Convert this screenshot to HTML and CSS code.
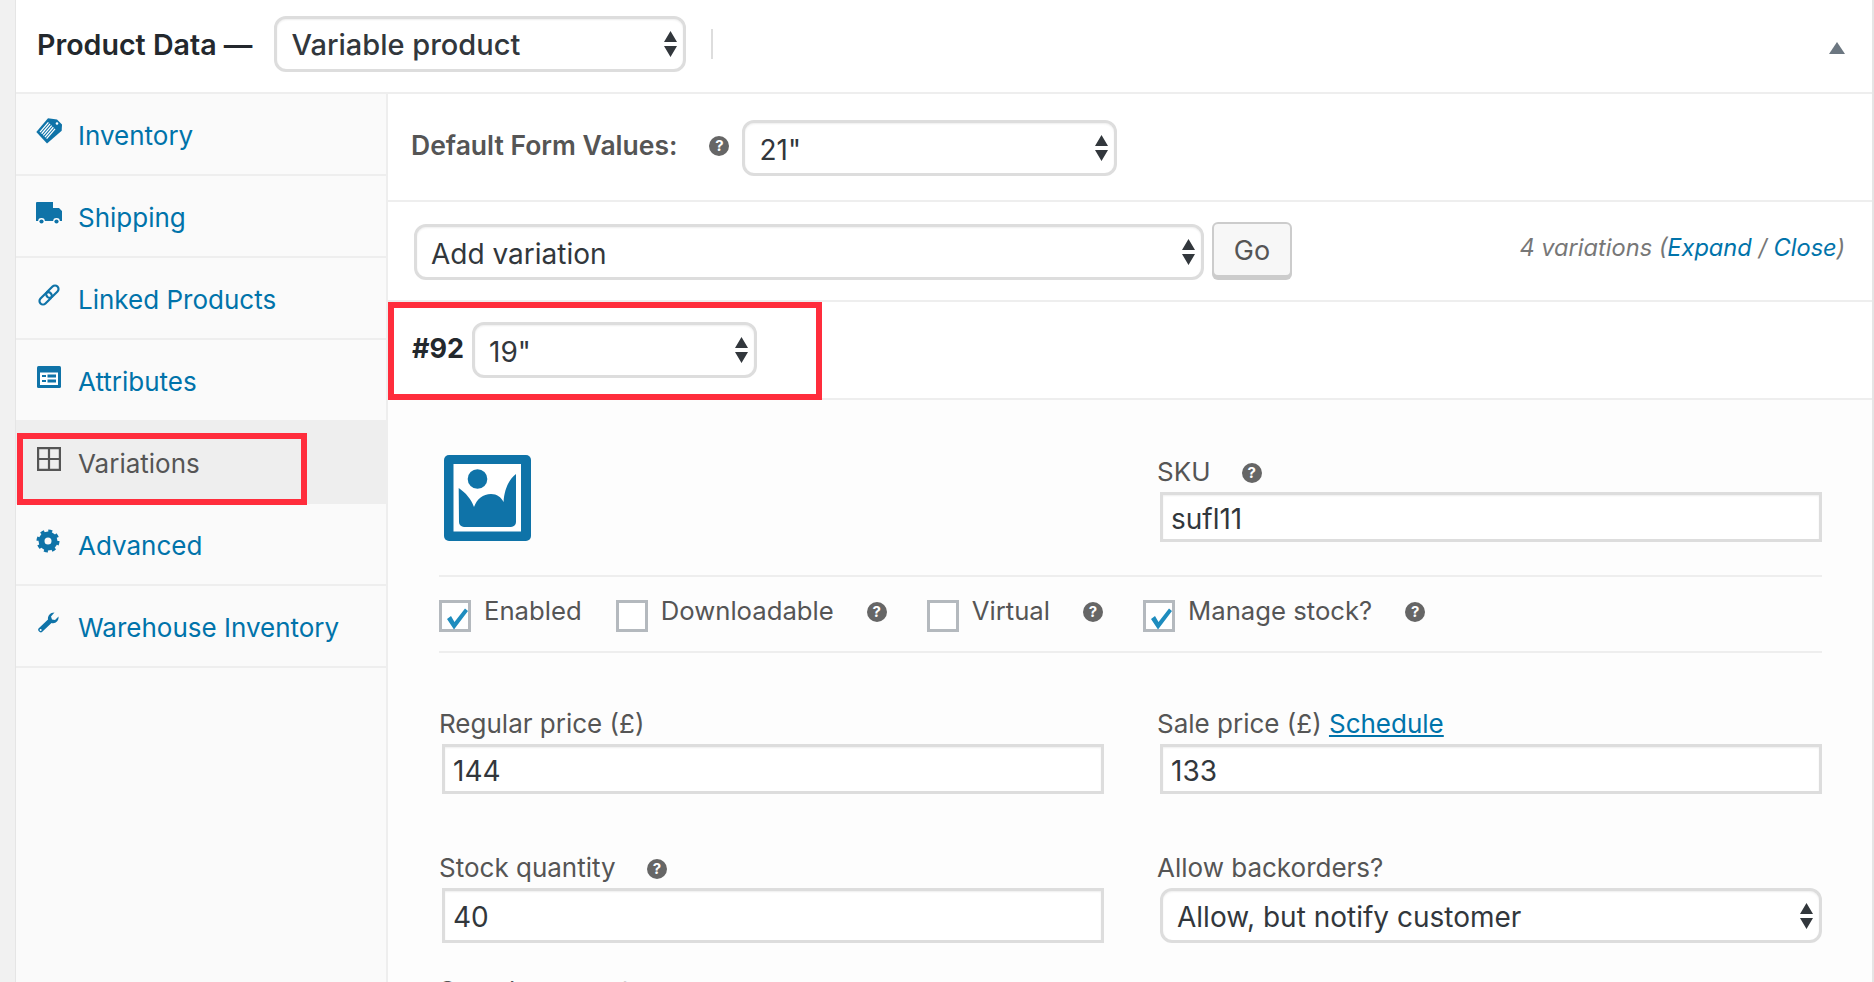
FILE: index.html
```html
<!DOCTYPE html>
<html lang="en">

<head>
    <meta charset="UTF-8" />
    <title>Product Data</title>
    <link rel="stylesheet" href="styles.css">
</head>

<body>
    <div class="gutter"></div>
    <div class="panel">
        <div class="panel-head">
            <h2>Product Data &mdash;</h2>
            <div class="select select-type">
                <select><option>Variable product</option></select>
                <svg class="arrows" width="13" height="26" viewBox="0 0 13 26"><path d="M6.5 0 13 11H0zM0 15h13L6.5 26z"/></svg>
            </div>
            <span class="divider"></span>
            <span class="collapse"></span>
        </div>

        <div class="panel-body">
            <ul class="tabs">
                <li class="tab">
                    <svg class="tab-icon" width="26" height="26" viewBox="0 0 26 26">
                        <path fill="#0f73a8" d="M0.3 14 12 0.3l9 1.2 5 5-.3 6.3L11 25.4z"/>
                        <path stroke="#fff" stroke-width="1.3" d="M4 14.1 12.4 4.3M5.65 15.75 14.05 5.95M7.3 17.4 15.7 7.6M8.95 19.05 17.35 9.25M10.6 20.7 19 10.9"/>
                        <circle cx="21" cy="5.5" r="1.3" fill="#fff"/>
                    </svg>
                    <a href="#">Inventory</a>
                </li>
                <li class="tab">
                    <svg class="tab-icon" width="26" height="26" viewBox="0 0 26 26">
                        <path fill="#0f73a8" d="M0 3a1 1 0 0 1 1-1h16v6h6l3 3v10H0z"/>
                        <circle cx="5.5" cy="21.5" r="3.4" fill="#fff"/>
                        <circle cx="5.5" cy="21.5" r="2.1" fill="#0f73a8"/>
                        <circle cx="20.5" cy="21.5" r="3.4" fill="#fff"/>
                        <circle cx="20.5" cy="21.5" r="2.1" fill="#0f73a8"/>
                    </svg>
                    <a href="#">Shipping</a>
                </li>
                <li class="tab">
                    <svg class="tab-icon" width="26" height="26" viewBox="0 0 26 26">
                        <g transform="rotate(-45 13 13)" fill="none" stroke="#0f73a8" stroke-width="2.2">
                            <rect x="1" y="9.500" width="14.500" height="7" rx="3.500"/>
                            <rect x="10.500" y="9.500" width="14.500" height="7" rx="3.500"/>
                        </g>
                    </svg>
                    <a href="#">Linked Products</a>
                </li>
                <li class="tab">
                    <svg class="tab-icon" width="26" height="26" viewBox="0 0 26 26">
                        <rect x="1" y="2" width="24" height="22" rx="1.5" fill="#0f73a8"/>
                        <rect x="4" y="8.5" width="18" height="12.5" fill="#fff"/>
                        <path fill="#0f73a8" d="M6 11h4v2H6zM6 16h4v2H6zM11.5 10.5H20v3h-8.5zM11.5 15.5H20v3h-8.5z"/>
                    </svg>
                    <a href="#">Attributes</a>
                </li>
                <li class="tab tab-active">
                    <svg class="tab-icon" width="26" height="26" viewBox="0 0 26 26">
                        <path fill="none" stroke="#555" stroke-width="2.2" d="M2.1 2.1h21.800v21.800H2.100zM13 2v22M2 13h22"/>
                    </svg>
                    <a href="#">Variations</a>
                    <div class="mark mark-tab"></div>
                </li>
                <li class="tab">
                    <svg class="tab-icon" width="26" height="26" viewBox="0 0 26 26">
                        <circle cx="12" cy="13" r="6.500" fill="none" stroke="#0f73a8" stroke-width="6"/>
                        <circle cx="12" cy="13" r="10" fill="none" stroke="#0f73a8" stroke-width="3" stroke-dasharray="3.900 3.950"/>
                    </svg>
                    <a href="#">Advanced</a>
                </li>
                <li class="tab">
                    <svg class="tab-icon" width="26" height="26" viewBox="0 0 26 26">
                        <path fill="#0f73a8" fill-rule="evenodd" d="M2.500 18.500 12 9.500C11.500 6 14 2.500 18.500 2.500L15 6.500 16 9.500 19 10 22.500 6.500C23 11 19.500 14 15.500 13L6 22C4.500 23.500 1 20.500 2.500 18.500Z"/>
                        <circle cx="4.600" cy="20" r="1" fill="#fff"/>
                    </svg>
                    <a href="#">Warehouse Inventory</a>
                </li>
            </ul>

            <div class="main">
                <div class="row row-defaults">
                    <strong class="defaults-label">Default Form Values:</strong>
                    <span class="help">?</span>
                    <div class="select select-default">
                        <select><option>21"</option></select>
                        <svg class="arrows" width="13" height="26" viewBox="0 0 13 26"><path d="M6.5 0 13 11H0zM0 15h13L6.5 26z"/></svg>
                    </div>
                </div>

                <div class="row row-actions">
                    <div class="select select-action">
                        <select><option>Add variation</option></select>
                        <svg class="arrows" width="13" height="26" viewBox="0 0 13 26"><path d="M6.5 0 13 11H0zM0 15h13L6.5 26z"/></svg>
                    </div>
                    <button class="go">Go</button>
                    <div class="count">4 variations (<a href="#">Expand</a> / <a href="#">Close</a>)</div>
                </div>

                <div class="row row-variation">
                    <strong class="var-id">#92</strong>
                    <div class="select select-variation">
                        <select><option>19"</option></select>
                        <svg class="arrows" width="13" height="26" viewBox="0 0 13 26"><path d="M6.5 0 13 11H0zM0 15h13L6.5 26z"/></svg>
                    </div>
                    <div class="mark mark-row"></div>
                </div>

                <div class="details">
                    <div class="cols">
                        <div class="thumb">
                            <svg width="87" height="86" viewBox="0 0 87 86">
                                <rect width="87" height="86" rx="5" fill="#0f73a8"/>
                                <rect x="9.500" y="9" width="67.500" height="67.500" fill="#fff"/>
                                <circle cx="33.500" cy="24" r="9.800" fill="#0f73a8"/>
                                <path fill="#0f73a8" d="M14.700 33C22 38 27 44 30 52 33 44 39 39 47 39 53 39 57 42 59.600 47 60 35 65 24 72 19V67a5 5 0 0 1-5 5H20a5 5 0 0 1-5-5z"/>
                            </svg>
                        </div>
                        <div class="field">
                            <label>SKU <span class="help help-label">?</span></label>
                            <input type="text" value="sufl11">
                        </div>
                    </div>

                    <div class="checks">
                        <span class="box">
                            <svg width="26" height="26" viewBox="0 0 26 26"><path fill="#1e8cbe" d="M3 13l4-3 3.500 6L21 2.500 24 5 10 23.500z"/></svg>
                        </span>
                        <span class="check-text gap-enabled">Enabled</span>
                        <span class="box"></span>
                        <span class="check-text">Downloadable</span>
                        <span class="help help-check">?</span>
                        <span class="box"></span>
                        <span class="check-text">Virtual</span>
                        <span class="help help-check">?</span>
                        <span class="box">
                            <svg width="26" height="26" viewBox="0 0 26 26"><path fill="#1e8cbe" d="M3 13l4-3 3.500 6L21 2.500 24 5 10 23.500z"/></svg>
                        </span>
                        <span class="check-text">Manage stock?</span>
                        <span class="help help-check">?</span>
                    </div>

                    <div class="cols cols-price">
                        <div class="field">
                            <label>Regular price (&pound;)</label>
                            <input type="text" value="144">
                        </div>
                        <div class="field">
                            <label>Sale price (&pound;) <a href="#">Schedule</a></label>
                            <input type="text" value="133">
                        </div>
                    </div>

                    <div class="cols cols-stock">
                        <div class="field">
                            <label>Stock quantity <span class="help help-label">?</span></label>
                            <input class="tall" type="text" value="40">
                        </div>
                        <div class="field">
                            <label>Allow backorders?</label>
                            <div class="select select-full">
                                <select><option>Allow, but notify customer</option></select>
                                <svg class="arrows" width="13" height="26" viewBox="0 0 13 26"><path d="M6.5 0 13 11H0zM0 15h13L6.5 26z"/></svg>
                            </div>
                        </div>
                    </div>

                    <div class="field field-last">
                        <label>Sample amount</label>
                    </div>
                </div>
            </div>
        </div>
    </div>
</body>

</html>
```

FILE: styles.css
```css
* {
    box-sizing: border-box;
}

html,
body {
    margin: 0;
    height: 982px;
    overflow: hidden;
}

body {
    display: flex;
    font-family: Inter, "Liberation Sans", sans-serif;
    font-size: 26px;
    color: #555;
    background-color: #f1f1f1;
}

a {
    color: #0073aa;
    text-decoration: none;
}

.gutter {
    width: 16px;
    flex: none;
    border-right: 1px solid #e5e5e5;
}

.panel {
    flex: 1;
    min-width: 0;
    background-color: #fff;
    border-right: 2px solid #e5e5e5;
}

/* header */
.panel-head {
    display: flex;
    align-items: center;
    height: 94px;
    padding: 0 27px 4px 21px;
    border-bottom: 2px solid #eee;
}

.panel-head h2 {
    margin: 0 22px 0 0;
    font-size: 28.6px;
    font-weight: 600;
    color: #23282d;
    white-space: nowrap;
}

.divider {
    width: 2px;
    height: 30px;
    margin-left: 25px;
    background-color: #ddd;
}

.collapse {
    margin-left: auto;
    margin-top: 8px;
    border-left: 8px solid transparent;
    border-right: 8px solid transparent;
    border-bottom: 12px solid #6c7781;
}

/* selects */
.select {
    position: relative;
    flex: none;
    height: 56px;
}

.select select {
    appearance: none;
    width: 100%;
    height: 100%;
    padding: 3px 40px 0 14px;
    font-family: inherit;
    font-size: 28px;
    color: #32373c;
    background-color: #fff;
    border: 3px solid #ddd;
    border-radius: 12px;
    box-shadow: inset 0 1px 2px rgba(0, 0, 0, 0.07);
}

.arrows {
    position: absolute;
    right: 9px;
    top: 15px;
    fill: #32373c;
    pointer-events: none;
}

.select-type {
    width: 412px;
}

.select-type select {
    padding-top: 0;
    font-size: 29px;
    font-weight: 500;
}

.select-default {
    width: 375px;
    margin-top: 2px;
}

.select-action {
    width: 790px;
    margin-top: 2px;
}

.select-variation {
    width: 285px;
}

.select-full {
    width: 662px;
    height: 55px;
    margin-left: 3px;
}

/* tabs */
.panel-body {
    display: flex;
}

.tabs {
    flex: none;
    width: 372px;
    height: 888px;
    margin: 0;
    padding: 0;
    list-style: none;
    background-color: #fafafa;
    border-right: 2px solid #eee;
}

.tab {
    position: relative;
    display: flex;
    align-items: flex-start;
    height: 82px;
    padding: 22px 0 0 20px;
    line-height: 40px;
    border-bottom: 2px solid #eee;
}

.tab-icon {
    flex: none;
    margin: 2px 16px 0 0;
}

.tab-active {
    background-color: #eee;
}

.tab-active a {
    color: #555;
}

/* red annotation boxes */
.mark {
    position: absolute;
    border: 6px solid #ff2d3c;
}

.mark-tab {
    left: 1px;
    top: 11px;
    width: 290px;
    height: 72px;
}

.mark-row {
    left: 0;
    top: 0;
    width: 434px;
    height: 98px;
}

/* right side */
.main {
    flex: 1;
    min-width: 0;
}

.row {
    position: relative;
    display: flex;
    align-items: center;
    border-bottom: 2px solid #eee;
}

.row-defaults {
    height: 108px;
    padding-left: 23px;
}

.defaults-label {
    font-weight: 600;
    font-size: 26.5px;
    margin-top: -4px;
}

.help {
    display: inline-block;
    flex: none;
    width: 20px;
    height: 20px;
    font-size: 15px;
    font-weight: 700;
    line-height: 20px;
    text-align: center;
    color: #fff;
    background-color: #666;
    border-radius: 50%;
}

.row-defaults .help {
    margin: -2px 13px 0 32px;
}

.row-actions {
    height: 100px;
    padding: 0 27px 0 26px;
}

.go {
    width: 80px;
    height: 55px;
    margin: -3px 0 0 8px;
    padding: 2px 0 0;
    font-family: inherit;
    font-size: 27px;
    color: #555;
    background-color: #f7f7f7;
    border: 2px solid #ccc;
    border-radius: 6px;
    box-shadow: 0 3px 0 #ccc;
}

.count {
    margin: -8px 0 0 auto;
    font-size: 23.6px;
    font-style: italic;
    color: #777;
    white-space: nowrap;
}

.row-variation {
    height: 98px;
    padding-left: 24px;
}

.var-id {
    width: 60px;
    margin-top: -4px;
    font-size: 27px;
    font-weight: 700;
    color: #23282d;
}

.details {
    height: 582px;
    padding: 55px 50px 0 51px;
    background-color: #fdfdfd;
}

.cols {
    display: grid;
    grid-template-columns: 664px 664px;
    column-gap: 54px;
}

.thumb {
    padding-left: 5px;
    height: 87px;
}

.thumb svg {
    display: block;
}

.field label {
    display: block;
    height: 32px;
    margin-bottom: 5px;
    line-height: 34px;
    white-space: nowrap;
}

.field label a {
    text-decoration: underline;
}

.field input {
    display: block;
    width: 662px;
    height: 50px;
    margin-left: 3px;
    padding: 3px 8px 0;
    font-family: inherit;
    font-size: 28px;
    color: #32373c;
    background-color: #fff;
    border: 3px solid #ddd;
    border-radius: 0;
    box-shadow: inset 0 1px 2px rgba(0, 0, 0, 0.07);
}

.field input.tall {
    height: 55px;
}

.help-label {
    margin-left: 24px;
    vertical-align: 3px;
}

.checks {
    display: flex;
    align-items: flex-start;
    height: 78px;
    margin-top: 33px;
    padding-top: 23px;
    border-top: 2px solid #eee;
    border-bottom: 2px solid #eee;
}

.box {
    flex: none;
    width: 32px;
    height: 32px;
    padding: 3px;
    background-color: #fff;
    border: 3px solid #b4b9be;
}

.box svg {
    display: block;
    margin: 0 0 0 -1px;
}

.check-text {
    margin: -5px 33px 0 13px;
    font-size: 25.7px;
    line-height: 32px;
    white-space: nowrap;
}

.check-text.gap-enabled {
    margin-right: 34px;
}

.help-check {
    margin: 2px 40px 0 0;
}

.cols-price {
    margin-top: 54px;
}

.cols-stock {
    margin-top: 57px;
}

.field-last {
    margin-top: 31px;
}
```
